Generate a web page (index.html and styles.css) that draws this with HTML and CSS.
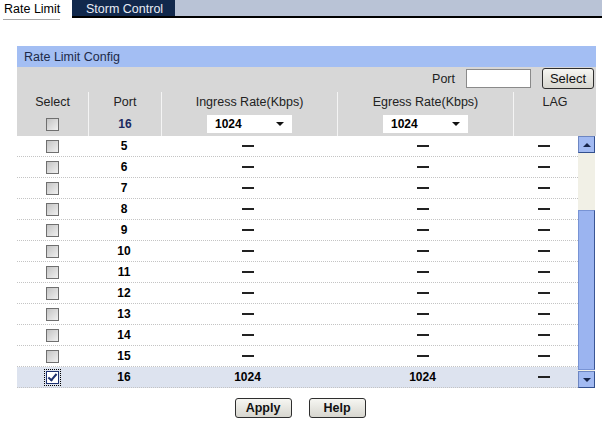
FILE: index.html
```html
<!DOCTYPE html>
<html lang="en">
<head>
    <meta charset="UTF-8">
    <title>Rate Limit</title>
    <link rel="stylesheet" href="styles.css">
</head>
<body>
    <div class="tabs">
        <div class="tab current">Rate Limit</div>
        <div class="tab">Storm Control</div>
        <div class="tab-fill"></div>
    </div>

    <div class="panel">
        <div class="panel-title">Rate Limit Config</div>
        <div class="search-row">
            <span class="search-label">Port</span>
            <input class="search-input" type="text">
            <button class="btn btn-select">Select</button>
        </div>
        <div class="row head">
            <div class="c c1">Select</div>
            <div class="c c2">Port</div>
            <div class="c c3">Ingress Rate(Kbps)</div>
            <div class="c c4">Egress Rate(Kbps)</div>
            <div class="c c5">LAG</div>
        </div>
        <div class="row edit">
            <div class="c c1"><span class="chk"></span></div>
            <div class="c c2">16</div>
            <div class="c c3"><span class="sel">1024<i class="arrow"></i></span></div>
            <div class="c c4"><span class="sel">1024<i class="arrow"></i></span></div>
            <div class="c c5"></div>
        </div>
        <div class="list-wrap">
            <div class="list" id="list"></div>
            <div class="scrollbar">
                <div class="sb-btn"><i class="up"></i></div>
                <div class="sb-track"></div>
                <div class="sb-thumb"></div>
                <div class="sb-btn"><i class="down"></i></div>
            </div>
        </div>
        <div class="actions">
            <button class="btn">Apply</button>
            <button class="btn">Help</button>
        </div>
    </div>

    <script>
        // ports 5..16 visible in the list, 16 is the selected one
        var list = document.getElementById("list");
        var html = "";
        for (var p = 5; p <= 16; p++) {
            var on = p == 16;
            html += '<div class="row' + (on ? ' checked' : '') + '">' +
                '<div class="c c1"><span class="chk' + (on ? ' on' : '') + '"></span></div>' +
                '<div class="c c2">' + p + '</div>' +
                '<div class="c c3">' + (on ? '1024' : '<span class="dash"></span>') + '</div>' +
                '<div class="c c4">' + (on ? '1024' : '<span class="dash"></span>') + '</div>' +
                '<div class="c c5"><span class="dash"></span></div>' +
                '</div>';
        }
        list.innerHTML = html;
    </script>
</body>
</html>
```

FILE: styles.css
```css
body {
    margin: 0;
    font-family: "Liberation Sans", Arial, sans-serif;
    font-size: 12px;
    color: #000;
    background: #fff;
}

/* tabs */
.tabs {
    display: flex;
    height: 18px;
}
.tab {
    height: 18px;
    line-height: 18px;
    font-size: 12.5px;
}
.tab.current {
    width: 72px;
    padding-left: 4px;
    box-sizing: border-box;
    color: #000;
    position: relative;
}
.tab.current::after {
    content: "";
    position: absolute;
    left: 3px;
    width: 57px;
    top: 19px;
    height: 1px;
    background: #a8a8a8;
}
.tab:nth-child(2) {
    width: 103px;
    padding-left: 14px;
    box-sizing: border-box;
    background: #11284c;
    color: #e8ecf4;
    border-bottom: 2px solid #000;
}
.tab-fill {
    flex: 1;
    background: #b9c3d6;
    border-bottom: 2px solid #000;
}

/* panel */
.panel {
    margin: 28px 0 0 17px;
    width: 579px;
}
.panel-title {
    height: 21px;
    line-height: 22px;
    padding-left: 7px;
    background: #a3bef3;
    color: #1d2a48;
    font-size: 12.5px;
}
.search-row {
    height: 23px;
    background: #d7d7d7;
    display: flex;
    align-items: center;
    justify-content: flex-end;
    padding-right: 2px;
}
.search-label {
    margin-right: 11px;
    font-size: 12.5px;
    color: #222;
}
.search-input {
    width: 65px;
    height: 19px;
    box-sizing: border-box;
    border: 1px solid #8a8a8a;
    margin: 0 11px 0 0;
    padding: 0;
    background: #fff;
}

.btn {
    height: 20px;
    padding: 0;
    font-family: "Liberation Sans", Arial, sans-serif;
    font-size: 12.5px;
    font-weight: bold;
    color: #111;
    border: 1px solid #2e2e2e;
    border-radius: 3px;
    background: linear-gradient(#f6f6f2, #d7d6cf);
    width: 57px;
}
.btn-select {
    width: 52px;
    height: 21px;
    font-weight: normal;
    font-size: 13px;
}

/* table rows */
.row {
    display: flex;
    height: 21px;
    line-height: 20px;
    border-bottom: 1px dotted #c4c4c4;
    box-sizing: border-box;
    font-weight: bold;
}
.c {
    text-align: center;
    display: flex;
    align-items: center;
    justify-content: center;
}
.c1 { width: 71px; }
.c2 { width: 72px; }
.c3 { width: 175px; }
.c4 { width: 175px; }
.c5 { flex: 1; }

.head {
    height: 22px;
    padding-top: 2px;
    background: #d7d7d7;
    font-weight: normal;
    font-size: 12.5px;
    color: #222;
    border-bottom: none;
}
.head .c,
.edit .c {
    border-right: 1px solid #f4f4f4;
}
.head .c5,
.edit .c5 {
    border-right: none;
}
.edit {
    height: 24px;
    background: #d7d7d7;
    border-bottom: none;
}
.edit .c2 {
    color: #1a2a60;
}

.sel {
    width: 85px;
    height: 18px;
    box-sizing: border-box;
    background: #fff;
    text-align: left;
    padding-left: 8px;
    line-height: 18px;
    position: relative;
    font-size: 12px;
}
.arrow {
    position: absolute;
    right: 8px;
    top: 7px;
    border-left: 4px solid transparent;
    border-right: 4px solid transparent;
    border-top: 4px solid #111;
}

.chk {
    width: 11px;
    height: 11px;
    border: 1px solid #6f6f6f;
    background: linear-gradient(135deg, #c4c4c4, #f0f0f0);
    box-sizing: content-box;
    position: relative;
}
.chk.on {
    background: #fff;
    border-color: #1c2f6e;
    outline: 1px dotted #000;
    outline-offset: 1px;
}
.chk.on::after {
    content: "";
    position: absolute;
    left: 3px;
    top: 0px;
    width: 3px;
    height: 7px;
    border-right: 2px solid #1c2f6e;
    border-bottom: 2px solid #1c2f6e;
    transform: rotate(40deg);
}

.dash {
    display: inline-block;
    width: 12px;
    height: 2px;
    background: #222;
}

.list-wrap {
    display: flex;
    height: 252px;
    position: relative;
}
.list {
    width: 561px;
}
.list .c5 {
    width: 68px;
    flex: none;
}
.row.checked {
    background: #dde3ef;
}

/* scrollbar */
.scrollbar {
    width: 17px;
    display: flex;
    flex-direction: column;
    position: relative;
}
.sb-btn {
    height: 17px;
    box-sizing: border-box;
    background: #a2baf2;
    border: 1px solid #6d86c2;
    border-right-color: #33508e;
    border-bottom-color: #33508e;
    display: flex;
    align-items: center;
    justify-content: center;
}
.sb-track {
    flex: 1;
    background: #f1f0e6;
}
.sb-thumb {
    position: absolute;
    left: 0;
    top: 74px;
    width: 17px;
    height: 160px;
    box-sizing: border-box;
    background: #9bb4f0;
    border: 1px solid #7893d4;
    border-right-color: #3a5594;
}
.up {
    border-left: 4px solid transparent;
    border-right: 4px solid transparent;
    border-bottom: 4px solid #16244a;
}
.down {
    border-left: 4px solid transparent;
    border-right: 4px solid transparent;
    border-top: 4px solid #16244a;
}

.actions {
    display: flex;
    justify-content: center;
    gap: 17px;
    padding: 10px 0 0 0;
    margin-left: -13px;
}
```
